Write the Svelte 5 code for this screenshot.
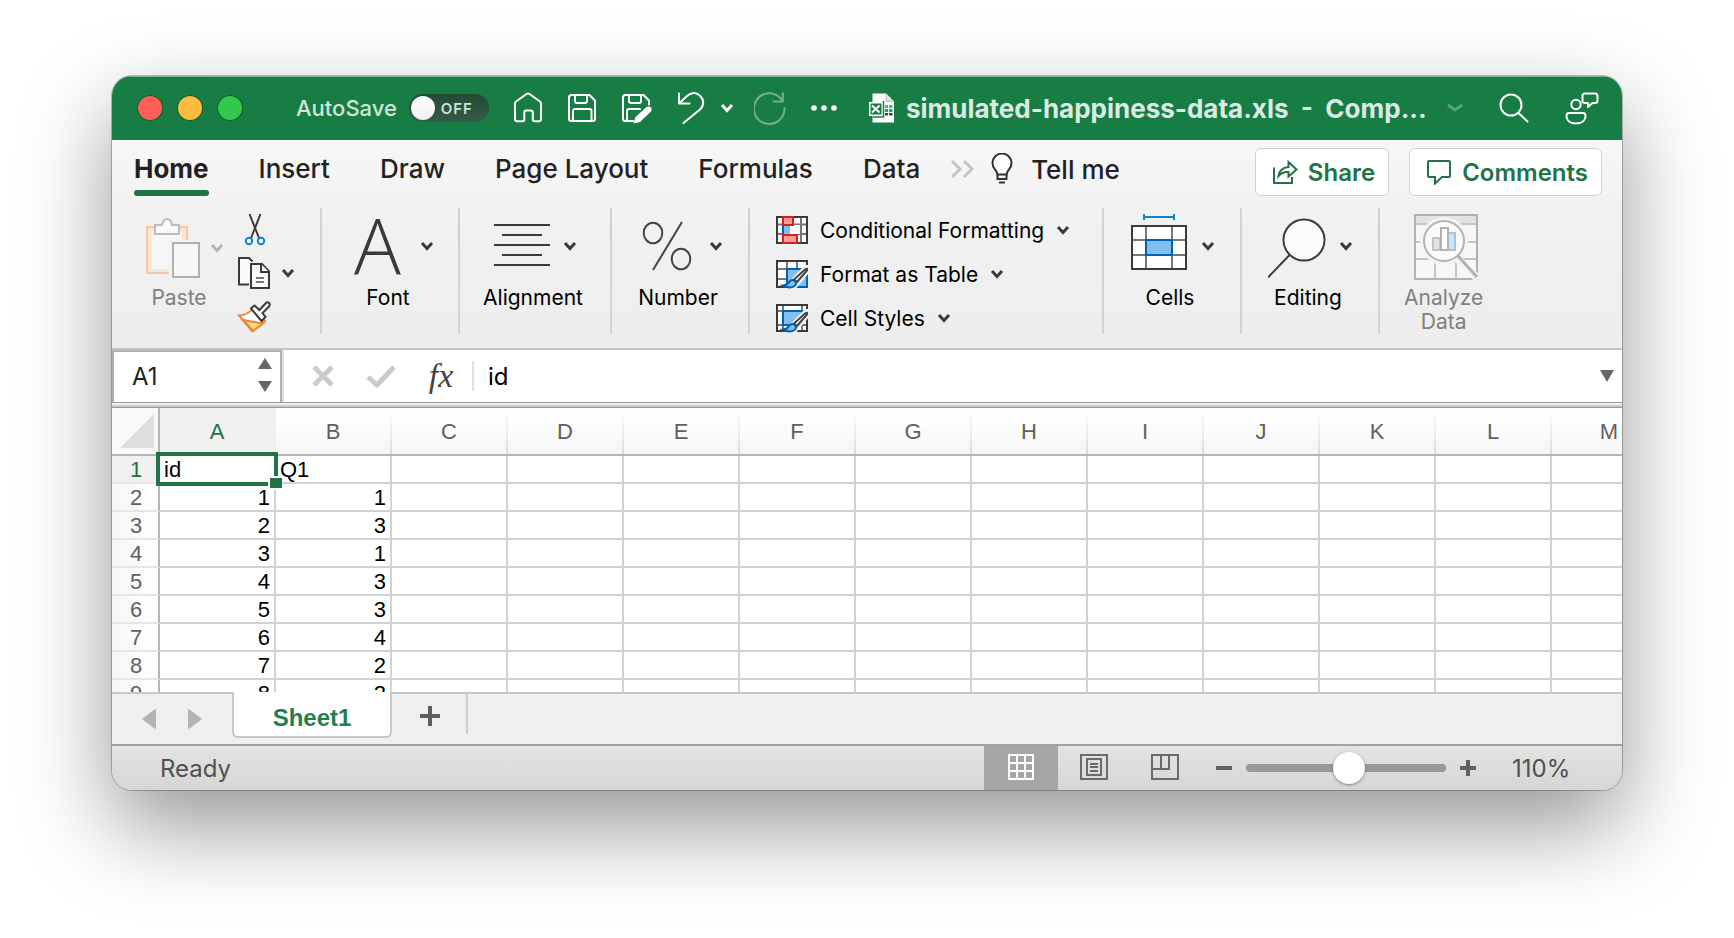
<script>
  const tabs = ['Home', 'Insert', 'Draw', 'Page Layout', 'Formulas', 'Data'];
  const columns = ['A', 'B', 'C', 'D', 'E', 'F', 'G', 'H', 'I', 'J', 'K', 'L', 'M'];
  const rows = [
    ['id', 'Q1'],
    [1, 1],
    [2, 3],
    [3, 1],
    [4, 3],
    [5, 3],
    [6, 4],
    [7, 2],
    [8, 2]
  ];
  let zoom = $state(52);
  let formula = $state('id');
  let cellName = $state('A1');
</script>

{#snippet chevron()}
  <svg class="chev" viewBox="0 0 14 12" aria-hidden="true"><path d="M2 3l5 5.5L12 3" /></svg>
{/snippet}

{#snippet brush()}
  <path d="M13 27L30 9.500l2 0v3L18 29z" fill="#f3f3f3" stroke="#f3f3f3" stroke-width="5" />
  <path d="M18 21.500L29 11.500q3-2 2 1L21 24z" fill="#fff" stroke="#444" stroke-width="2" />
  <path d="M7 27.500q4.500-.5 6-3.500 2-3 5.500-1.500 3 3 0 5.500-4.500 3-11.500-.5z" fill="#83beec" stroke="#0063b1" stroke-width="2" />
{/snippet}

<main class="desktop">
  <div class="window">
    <header class="titlebar">
      <div class="lights">
        <button class="red" aria-label="Close"></button>
        <button class="yellow" aria-label="Minimize"></button>
        <button class="green" aria-label="Full screen"></button>
      </div>
      <label class="autosave">
        <span>AutoSave</span>
        <span class="switch"><input type="checkbox" /><span class="off">OFF</span></span>
      </label>
      <div class="quick">
        <button aria-label="Home">
          <svg class="ti" viewBox="0 0 34 34"><path d="M4 12.500Q4 11.500 4.800 10.800L15.500 3q1.500-1 3 0l10.700 7.800q.8.7.8 1.700v15.500q0 2.300-2 2.300h-4.500q-1.700 0-1.700-1.700V21.500q0-2-2-2h-4.500q-2 0-2 2v7.100q0 1.700-1.700 1.700H6q-2 0-2-2.300z" /></svg>
        </button>
        <button aria-label="Save">
          <svg class="ti" viewBox="0 0 34 34"><path d="M6.500 4h18L30 9.500V28q0 2-2.500 2h-21Q4 30 4 28V6.500Q4 4 6.500 4zM10 4v6q0 2 2 2h8q2 0 2-2V4M8 30V20q0-2 2-2h14.500q2 0 2 2v10" /></svg>
        </button>
        <button aria-label="Save as">
          <svg class="ti" viewBox="0 0 34 34"><path d="M14 30H6.500Q4 30 4 28V6.500Q4 4 6.500 4h18L30 9.500v4M10 4v6q0 2 2 2h8q2 0 2-2V4M8 30V20q0-2 2-2h11" /><path d="M14.500 32.500l2-6.500L27 16.500q3-2 5 0 1.500 2-.5 4.500L21 31z" fill="#fff" stroke="none" /></svg>
        </button>
        <button class="undo" aria-label="Undo">
          <svg class="ti" viewBox="0 0 34 34"><path d="M6 2.500v10h10.500M6 12.500l8-7.500c4-3.500 9-4 12.700-.6 4.600 4 4.600 10 .3 14L10.500 32" /></svg>
          {@render chevron()}
        </button>
        <button class="dim" aria-label="Redo">
          <svg class="ti" viewBox="0 0 34 34"><path d="M30.500 17A15.300 15.300 0 1 1 27.500 8.500M28.800 2v8.500H19.500" /></svg>
        </button>
        <button aria-label="More commands">
          <svg class="ti" viewBox="0 0 34 34"><g fill="#fff" stroke="none"><circle cx="6" cy="17" r="2.800" /><circle cx="16" cy="17" r="2.800" /><circle cx="26" cy="17" r="2.800" /></g></svg>
        </button>
      </div>
      <h1 class="doc">
        <svg class="file" viewBox="0 0 28 32" aria-hidden="true">
          <path d="M4.500 1.500h13.500l8 8V30.500H4.500z" fill="#fff" /><path d="M18 1.500v8h8" fill="#dde5e0" stroke="#b8c4bc" />
          <path d="M17 13h3v3h-3zM21 13h3.500v3H21z" fill="#33c481" /><path d="M17 17h3v3h-3zM21 17h3.500v3H21z" fill="#21a366" /><path d="M17 21h3v2.500h-3zM21 21h3.500v2.500H21z" fill="#185c37" />
          <path d="M1 10h14v14H1z" fill="#fff" /><path d="M2.500 11.500h11v11h-11z" fill="#187c45" />
          <path d="M4 13.500l7.500 7M11.500 13.500L4 20.500" stroke="#fff" stroke-width="2" /><path d="M15.500 9v16H5" fill="none" stroke="#187c45" stroke-width="1.500" />
        </svg>
        <span>{'simulated-happiness-data.xls  -  Comp...'}</span>
        <svg class="titlechev" viewBox="0 0 16 10" aria-hidden="true"><path d="M1 2l7 5 7-5" /></svg>
      </h1>
      <div class="right">
        <button aria-label="Search"><svg class="ti" viewBox="0 0 34 34"><circle cx="14" cy="14" r="10.500" /><path d="M21.500 22l9 8.500" /></svg></button>
        <button aria-label="Account"><svg class="ti" viewBox="0 0 34 34"><circle cx="11" cy="13.500" r="4.700" /><path d="M4 22h14q2.500 0 2.500 2.500c0 5-4 8-9.500 8s-9.500-3-9.500-8Q1.500 22 4 22zM20 2.500h10q2.500 0 2.500 2.500v4.500q0 2.500-2.500 2.500h-2.500L23 16v-4h-3q-2.500 0-2.500-2.500V5q0-2.500 2.500-2.500z" /></svg></button>
      </div>
    </header>

    <section class="ribbon">
      <div class="tabrow">
        <nav class="tabs">
          {#each tabs as tab, i}
            <button class:current={i === 0}>{tab}</button>
          {/each}
        </nav>
        <button class="more" aria-label="More tabs"><svg viewBox="0 0 24 20"><path d="M2 2l8 8-8 8M14 2l8 8-8 8" /></svg></button>
        <button class="tell">
          <svg viewBox="0 0 22 32" aria-hidden="true"><path d="M6.500 21.500Q6 18.500 4 16.500A9.500 9.500 0 1 1 18 16.500q-2 2-2.500 5z" fill="#fff" /><path d="M6.500 21.500v4.500h9v-4.500" /><path d="M8 29.500h6" stroke-width="2" /></svg>
          Tell me
        </button>
        <div class="actions">
          <button>
            <svg viewBox="0 0 26 26" aria-hidden="true"><path d="M2 8.500V24h18v-6" /><path d="M6.500 17q1-8 10-9V3l8 7.500-8 7v-4.500q-6-.5-10 4z" /></svg>
            Share
          </button>
          <button>
            <svg viewBox="0 0 26 26" aria-hidden="true"><path d="M3 2h20q1 0 1 1v14q0 1-1 1h-7l-7 6.500V18H3q-1 0-1-1V3q0-1 1-1z" /></svg>
            Comments
          </button>
        </div>
      </div>

      <div class="groups">
        <div class="group clip">
          <button class="big off-state">
            <span class="pic">
              <svg width="56" height="64" viewBox="0 0 56 64" aria-hidden="true">
                <path d="M3 11h40v46H3z" fill="#f9e8cf" stroke="#f3c6a5" stroke-width="2" /><path d="M8 15h30v38H8z" fill="#f6f6f6" />
                <path d="M11 18V9h7q1-6 5-6t5 6h7v9z" fill="#fafafa" stroke="#bcbcbc" stroke-width="2" />
                <path d="M25 24h31v40H25z" fill="#f2f2f2" /><path d="M29 27h26v34H29z" fill="#f7f7f7" stroke="#b0b0b0" stroke-width="2" />
              </svg>
              {@render chevron()}
            </span>
            <span>Paste</span>
          </button>
          <div class="small">
            <button aria-label="Cut"><svg width="34" height="34" viewBox="0 0 34 34"><path d="M12.500 2L22 26M23.500 2L14 26" fill="none" stroke="#3a3a3a" stroke-width="2" /><g fill="#fff" stroke="#0a84cf" stroke-width="2"><circle cx="12" cy="29" r="3.200" /><circle cx="24" cy="29" r="3.200" /></g></svg></button>
            <button aria-label="Copy"><svg width="34" height="34" viewBox="0 0 34 34"><g fill="#fafafa" stroke="#3a3a3a" stroke-width="2"><path d="M12 28.500H2V2h10l3.500 3.500" /><path d="M14 8h11l7 7.500V32H14z" /><path d="M24 8v8h8" /></g><path d="M19 22h8M19 26h8" stroke="#777" stroke-width="2" /></svg>{@render chevron()}</button>
            <button aria-label="Format painter"><svg width="34" height="34" viewBox="0 0 34 34"><path d="M2 15.500q9-.5 14-7L28 21q-6 3-13 10z" fill="#fff" stroke="#ee8434" stroke-width="2" /><path d="M6 20l20 3.500-10 7.500z" fill="#fbd98b" stroke="#ee8434" stroke-width="2" /><path d="M14 8.500l3.500-3 5 4.500 6-6.500q2-2 3.500-.5t0 3.500L25.500 13l3 4-4 4z" fill="#fff" stroke="#3a3a3a" stroke-width="2" /></svg></button>
          </div>
        </div>

        <div class="group">
          <button class="big">
            <span class="pic"><span class="letter" aria-hidden="true">A</span>{@render chevron()}</span>
            <span>Font</span>
          </button>
        </div>

        <div class="group">
          <button class="big">
            <span class="pic"><svg width="56" height="64" viewBox="0 0 56 64" aria-hidden="true"><path d="M0 11h56M8 21h40M0 31h56M8 41h40M0 51h56" stroke="#3a3a3a" stroke-width="2" /></svg>{@render chevron()}</span>
            <span>Alignment</span>
          </button>
        </div>

        <div class="group">
          <button class="big">
            <span class="pic"><svg width="58" height="64" viewBox="-4 0 58 64" aria-hidden="true"><g fill="none" stroke="#444" stroke-width="2"><ellipse cx="11" cy="19" rx="9.300" ry="10.300" /><ellipse cx="39" cy="45" rx="9.300" ry="10.300" /><path d="M40 8L11 56" /></g></svg>{@render chevron()}</span>
            <span>Number</span>
          </button>
        </div>

        <div class="group styles">
          <button>
            <svg width="32" height="32" viewBox="0 0 32 32" aria-hidden="true"><path d="M1 3h30v26H1z" fill="#fff" stroke="#3a3a3a" stroke-width="2" /><path d="M2 10.500h28M2 20h28M25 4v24M7 4v24" stroke="#777" stroke-width="2" /><path d="M8 11h16v9H8z" fill="#fff" /><path d="M7 11h7v9H7z" fill="#83beec" /><path d="M7 11v9" stroke="#0063b1" stroke-width="2" /><path d="M7 3h10v8H7zM7 21h14v8H7z" fill="#ff9a9a" stroke="#d6201b" stroke-width="2" /></svg>
            Conditional Formatting {@render chevron()}
          </button>
          <button>
            <svg width="32" height="32" viewBox="0 0 32 32" aria-hidden="true"><path d="M1 3h30v26H1z" fill="#fff" stroke="#3a3a3a" stroke-width="2" /><path d="M2 11h28M2 21h10M11 4v24M21 4v8" stroke="#777" stroke-width="2" /><path d="M11 11h20v18H11z" fill="#83beec" stroke="#0063b1" stroke-width="2" />{@render brush()}</svg>
            Format as Table {@render chevron()}
          </button>
          <button>
            <svg width="32" height="32" viewBox="0 0 32 32" aria-hidden="true"><path d="M1 3h30v26H1z" fill="#fff" stroke="#3a3a3a" stroke-width="2" /><path d="M2 9h28M2 23h28M7 4v24M26 4v24" stroke="#777" stroke-width="2" /><path d="M7 9h19v14H7z" fill="#83beec" stroke="#0063b1" stroke-width="2" />{@render brush()}</svg>
            Cell Styles {@render chevron()}
          </button>
        </div>

        <div class="group">
          <button class="big">
            <span class="pic"><svg width="58" height="64" viewBox="0 0 58 64" aria-hidden="true"><path d="M2 12h54v43H2z" fill="#fff" stroke="#3a3a3a" stroke-width="2" /><path d="M16 13v41M42 13v41M3 26h52M3 41h52" stroke="#777" stroke-width="2" /><path d="M16 26h26v15H16z" fill="#83beec" stroke="#0063b1" stroke-width="2" /><path d="M14 3h30M14 0v6M44 0v6" stroke="#0a84cf" stroke-width="2" /></svg>{@render chevron()}</span>
            <span>Cells</span>
          </button>
        </div>

        <div class="group">
          <button class="big">
            <span class="pic"><svg width="58" height="64" viewBox="0 0 58 64" aria-hidden="true"><circle cx="36" cy="26" r="20.500" fill="#fbfbfb" stroke="#3a3a3a" stroke-width="2" /><path d="M21.500 41L0 63.500" stroke="#3a3a3a" stroke-width="2" /></svg>{@render chevron()}</span>
            <span>Editing</span>
          </button>
        </div>

        <div class="group analyze">
          <button class="big off-state">
            <span class="pic"><svg width="66" height="68" viewBox="0 0 66 68" aria-hidden="true"><path d="M2 3h62v64H2z" fill="#f7f7f7" stroke="#b2b2b2" stroke-width="2" /><path d="M3 4h60v8H3z" fill="#e2e2e0" /><path d="M3 12h60M3 30h60M3 47h60M22 48v18M43 48v18" stroke="#c4c4c4" stroke-width="2" /><path d="M45 47l20 20" stroke="#f4f4f4" stroke-width="8" /><circle cx="31" cy="29" r="24" fill="#f4f4f4" /><circle cx="31" cy="29" r="20" fill="#fafafa" stroke="#b2b2b2" stroke-width="2" /><path d="M45 44l19 21" stroke="#b2b2b2" stroke-width="3" /><path d="M20 26h7v12h-7z" fill="#e4e4e2" stroke="#c4c4c4" stroke-width="2" /><path d="M35 21h7v17h-7z" fill="#cfe4f3" stroke="#a2c6e2" stroke-width="2" /><path d="M28 16h7v22h-7z" fill="#fff" stroke="#b2b2b2" stroke-width="2" /></svg></span>
            <span>Analyze<br />Data</span>
          </button>
        </div>
      </div>
    </section>

    <section class="formulabar">
      <div class="namebox">
        <input aria-label="Name box" bind:value={cellName} />
        <svg viewBox="0 0 14 36" aria-hidden="true"><path d="M7 0l7 11H0zM0 23h14L7 34z" /></svg>
      </div>
      <button class="fb" aria-label="Cancel"><svg width="24" height="24" viewBox="0 0 24 24"><path d="M3 3l18 18M21 3L3 21" /></svg></button>
      <button class="fb" aria-label="Enter"><svg width="30" height="24" viewBox="0 0 30 24"><path d="M2 13l9 8L28 3" /></svg></button>
      <button class="fx" aria-label="Insert function">fx</button>
      <input class="formula" aria-label="Formula" bind:value={formula} />
      <button class="expand" aria-label="Expand formula bar"><svg width="14" height="12" viewBox="0 0 14 12"><path d="M0 0h14L7 12z" /></svg></button>
    </section>

    <div class="sheet">
      <table>
        <colgroup><col class="rowcol" />{#each columns as c}<col class="datacol" />{/each}</colgroup>
        <thead>
          <tr>
            <th class="corner"><svg width="34" height="34" viewBox="0 0 34 34" aria-hidden="true"><path d="M34 0v34H0z" /></svg></th>
            {#each columns as c, i}<th scope="col" class:active={i === 0}>{c}</th>{/each}
          </tr>
        </thead>
        <tbody>
          {#each rows as row, r}
            <tr>
              <th scope="row" class:active={r === 0}>{r + 1}</th>
              {#each columns as c, i}
                <td class:num={r > 0} class:selected={r === 0 && i === 0}>{row[i] ?? ''}{#if r === 0 && i === 0}<i class="ring"></i><i class="handle"></i>{/if}</td>
              {/each}
            </tr>
          {/each}
        </tbody>
      </table>
    </div>

    <div class="sheettabs">
      <button class="nav" aria-label="Previous sheet"><svg width="14" height="20" viewBox="0 0 14 20"><path d="M14 1v18q0 1-1 1L0 10 13 0q1 0 1 1z" /></svg></button>
      <button class="nav" aria-label="Next sheet"><svg width="14" height="20" viewBox="0 0 14 20"><path d="M0 1v18q0 1 1 1l13-10L1 0Q0 0 0 1z" /></svg></button>
      <button class="sheettab">Sheet1</button>
      <button class="add" aria-label="Add sheet"><svg width="20" height="20" viewBox="0 0 20 20"><path d="M10 0v20M0 10h20" /></svg></button>
    </div>

    <footer class="status">
      <span class="ready">Ready</span>
      <button class="view on" aria-label="Normal view"><svg width="28" height="28" viewBox="0 0 28 28"><path d="M2 2h24v24H2zM10 2v24M18 2v24M2 10h24M2 18h24" /></svg></button>
      <button class="view" aria-label="Page layout view"><svg width="28" height="28" viewBox="0 0 28 28"><path d="M1 2h26v24H1zM7 6h14v16H7zM10 11h8M10 14h8M10 18h8" /></svg></button>
      <button class="view" aria-label="Page break view"><svg width="28" height="28" viewBox="0 0 28 28"><path d="M1 2h26v24H1zM1 16h17V2M10 2v14" /></svg></button>
      <div class="zoom">
        <button aria-label="Zoom out"><svg width="16" height="16" viewBox="0 0 16 16"><path d="M0 8h16" /></svg></button>
        <input type="range" aria-label="Zoom" min="0" max="100" bind:value={zoom} />
        <button aria-label="Zoom in"><svg width="16" height="16" viewBox="0 0 16 16"><path d="M8 0v16M0 8h16" /></svg></button>
        <span>110%</span>
      </div>
    </footer>
  </div>
</main>

<style>
  :global(body) { margin: 0; background: #fff; }
  * { box-sizing: border-box; }
  button, input { font: inherit; color: inherit; border: 0; background: none; padding: 0; margin: 0; }
  svg { display: block; flex: none; }
  .desktop { padding: 76px 112px 148px; overflow: hidden; font-family: Inter, "Liberation Sans", sans-serif; font-size: 22px; color: #000; }
  .window { border-radius: 20px; background: #efefef; box-shadow: 0 0 0 1px rgba(0, 0, 0, .25), 0 36px 90px rgba(0, 0, 0, .42); overflow: hidden; }

  .titlebar { height: 64px; background: #187c45; display: flex; align-items: center; padding: 0 23px 0 26px; box-shadow: inset 0 1px #7fb596; }
  .lights { display: flex; gap: 16px; }
  .lights button { width: 24px; height: 24px; border-radius: 50%; box-shadow: 0 0 0 1px rgba(0, 60, 20, .45); }
  .red { background: #ff5f57; }
  .yellow { background: #febc3d; }
  .green { background: #33c84b; }
  .autosave { display: flex; align-items: center; gap: 12px; margin-left: 54px; color: #cfe6d8; font-weight: 500; }
  .switch { position: relative; width: 80px; height: 28px; border-radius: 14px; background: linear-gradient(#234a35, #345c48); display: flex; align-items: center; justify-content: flex-end; padding-right: 16px; }
  .switch input { appearance: none; position: absolute; left: 2px; top: 2px; width: 24px; height: 24px; border-radius: 50%; background: linear-gradient(#fff, #f0f0f0); }
  .off { font-size: 15px; font-weight: 600; color: #cfe0d6; letter-spacing: 1px; }
  .quick { display: flex; gap: 20px; margin-left: 22px; }
  .quick button, .right button { display: flex; align-items: center; }
  .ti { width: 34px; height: 34px; fill: none; stroke: #fff; stroke-width: 2; stroke-linejoin: round; stroke-linecap: round; }
  .undo { gap: 13px; }
  .undo .chev { stroke: #fff; }
  .dim { opacity: .4; }
  .doc { margin: 0 0 0 26px; display: flex; align-items: center; font-size: 26px; font-weight: 700; color: #dcebe2; white-space: pre; }
  .file { width: 28px; height: 32px; margin-right: 10px; }
  .titlechev { width: 16px; height: 10px; margin-left: 20px; fill: none; stroke: #5ba57c; stroke-width: 3; }
  .right { display: flex; gap: 34px; margin-left: auto; }

  .chev { width: 14px; height: 12px; fill: none; stroke: #3a3a3a; stroke-width: 3; }

  .ribbon { background: linear-gradient(#f7f7f7, #f2f2f2 30%, #ededed); border-bottom: 2px solid #c4c4c4; }
  .tabrow { display: flex; align-items: flex-start; height: 68px; padding: 0 20px 0 22px; color: #222; font-size: 26px; font-weight: 500; }
  .tabs { display: flex; gap: 50px; }
  .tabs button { height: 56px; line-height: 58px; position: relative; white-space: nowrap; }
  .tabs .current { font-weight: 700; }
  .tabs .current::after { content: ''; position: absolute; left: 0; right: 0; bottom: 0; height: 6px; border-radius: 3px; background: #217346; }
  .more { margin: 19px 0 0 30px; }
  .more svg { width: 24px; height: 20px; fill: none; stroke: #c4c4c4; stroke-width: 3; }
  .tell { display: flex; align-items: center; gap: 18px; margin-left: 17px; height: 58px; white-space: nowrap; }
  .tell svg { width: 22px; height: 32px; fill: none; stroke: #333; stroke-width: 2; }
  .actions { margin-left: auto; display: flex; gap: 20px; padding-top: 8px; }
  .actions button { height: 48px; display: flex; align-items: center; gap: 10px; padding: 0 13px 0 16px; background: #fff; border: 1px solid #d0d0d0; border-radius: 6px; color: #217346; font-size: 24px; font-weight: 600; }
  .actions svg { width: 26px; height: 26px; fill: none; stroke: #217346; stroke-width: 2; }

  .groups { display: grid; grid-template-columns: 210px 138px 152px 138px 354px 138px 138px 1fr; height: 140px; padding-bottom: 16px; }
  .group { border-right: 2px solid #d2d2d2; display: flex; justify-content: center; align-items: flex-start; }
  .group:last-child { border-right: 0; justify-content: flex-start; padding-left: 24px; }
  .big { display: flex; flex-direction: column; align-items: center; font-size: 21px; line-height: 24px; gap: 8px; padding-top: 6px; }
  .big > span:last-child { padding-right: 4px; }
  .pic { display: flex; align-items: center; gap: 13px; height: 64px; }
  .letter { font-family: "Open Sans", sans-serif; font-weight: 300; font-size: 78px; line-height: 62px; height: 64px; margin: 0 6px 0 8px; color: #3a3a3a; }
  .off-state { color: #808080; }
  .off-state .chev { stroke: #b4b4b4; }
  .clip { justify-content: flex-start; padding-left: 32px; gap: 13px; }
  .clip .big { padding-top: 8px; gap: 6px; }
  .clip .pic { gap: 10px; }
  .clip .big > span:last-child { padding-right: 10px; }
  .small { display: flex; flex-direction: column; gap: 10px; padding-top: 4px; }
  .small button { display: flex; align-items: center; gap: 10px; }
  .styles { flex-direction: column; justify-content: flex-start; gap: 12px; padding: 6px 0 0 26px; font-size: 21px; }
  .styles button { display: flex; align-items: center; gap: 12px; height: 32px; white-space: nowrap; }

  .formulabar { display: flex; align-items: center; height: 58px; background: linear-gradient(#fff 52px, #999 52px, #999 53px, #f0f0f0 53px, #f0f0f0 55px, #ccc 55px, #ccc 57px, #999 57px); padding-bottom: 6px; }
  .namebox { width: 170px; height: 52px; border: 2px solid #b0b0b0; border-bottom: 0; display: flex; align-items: center; justify-content: space-between; padding: 0 8px 2px 18px; box-shadow: 2px 0 #ddd; }
  .namebox input { width: 100px; font-size: 24px; color: #222; outline: 0; }
  .namebox svg { width: 14px; height: 36px; fill: #666; }
  .fb { margin-left: 29px; }
  .fb svg { fill: none; stroke: #cbcbcb; stroke-width: 5; }
  .fb + .fb { margin-left: 31px; }
  .fx { margin-left: 30px; width: 30px; font: italic 34px/36px "Liberation Serif", serif; color: #444; }
  .formula { flex: 1; min-width: 0; height: 30px; margin-left: 16px; padding-left: 14px; border-left: 2px solid #e0e0e0; font-size: 24px; outline: 0; }
  .expand { margin: 0 8px; }
  .expand svg { fill: #666; }

  .sheet { height: 286px; overflow: hidden; border-bottom: 2px solid #c8c8c8; background: #fff; font-family: "Liberation Sans", Arial, sans-serif; }
  table { table-layout: fixed; width: 1556px; border-collapse: separate; border-spacing: 0; }
  .rowcol { width: 48px; }
  .datacol { width: 116px; }
  th { font-weight: 400; color: #606060; padding: 0; }
  thead th { height: 48px; padding: 2px 2px 0 0; background: linear-gradient(to bottom, #fff, #dcdcdc) right / 2px 100% no-repeat, linear-gradient(#fff, #f6f6f6); border-bottom: 2px solid #b6b6b6; }
  thead .active { background: #f0f0f0; color: #217346; }
  .corner svg { margin: 0 0 0 8px; fill: #dedede; }
  thead .corner { border-right: 2px solid #b6b6b6; padding: 0; background: #f8f8f8; }
  tbody th { height: 28px; line-height: 23px; padding: 2px 0 1px 2px; border-right: 2px solid #b6b6b6; border-bottom: 2px solid #e6e6e6; background: linear-gradient(to right, #f6f6f6, #fff); }
  tbody th.active { color: #217346; background: #f0f0f0; }
  td { height: 28px; line-height: 23px; padding: 2px 4px 1px; border-right: 2px solid #d2d2d2; border-bottom: 2px solid #d2d2d2; }
  .num { text-align: right; }
  .selected { position: relative; }
  .ring { position: absolute; inset: -4px; border: 4px solid #217346; }
  .handle { position: absolute; right: -8px; bottom: -8px; width: 14px; height: 14px; background: #217346; border: 2px solid #fff; border-right: 0; }

  .sheettabs { display: flex; height: 50px; align-items: center; background: #efefef; }
  .nav { margin-left: 30px; }
  .nav + .nav { margin-left: 32px; }
  .nav svg { fill: #b4b4b4; }
  .sheettab { position: relative; align-self: flex-start; width: 160px; height: 46px; margin: -2px 0 0 30px; background: #fff; border: 2px solid #c8c8c8; border-top: 0; border-radius: 0 0 6px 6px; color: #217f4e; font: 700 24px/44px "Liberation Sans", Arial, sans-serif; padding-top: 4px; }
  .add { align-self: flex-start; height: 40px; width: 76px; padding: 2px 0 4px 28px; border-right: 2px solid #cdcdcd; }
  .add svg { stroke: #5c5c5c; stroke-width: 4; margin-top: 6px; }

  .status { display: flex; height: 46px; border-top: 2px solid #a2a2a2; background: linear-gradient(#e3e3e3, #d6d6d6); align-items: center; font-size: 24px; color: #505050; }
  .ready { flex: 1; padding-left: 48px; }
  .view { height: 44px; width: 71px; display: flex; justify-content: center; padding-top: 7px; }
  .view svg { fill: none; stroke: #6a6a6a; stroke-width: 2; }
  .view.on { width: 74px; background: #a6a6a6; }
  .view.on svg { stroke: #fff; }
  .zoom { display: flex; align-items: center; gap: 14px; width: 422px; padding-left: 16px; }
  .zoom button svg { stroke: #606060; stroke-width: 4; }
  .zoom span { margin-left: 22px; font-weight: 400; }
  input[type='range'] { appearance: none; width: 200px; height: 32px; }
  input[type='range']::-webkit-slider-runnable-track { height: 8px; border-radius: 4px; background: #999; }
  input[type='range']::-webkit-slider-thumb { appearance: none; width: 32px; height: 32px; margin-top: -12px; border-radius: 50%; background: #fff; box-shadow: 0 1px 3px rgba(0, 0, 0, .4); }
</style>
